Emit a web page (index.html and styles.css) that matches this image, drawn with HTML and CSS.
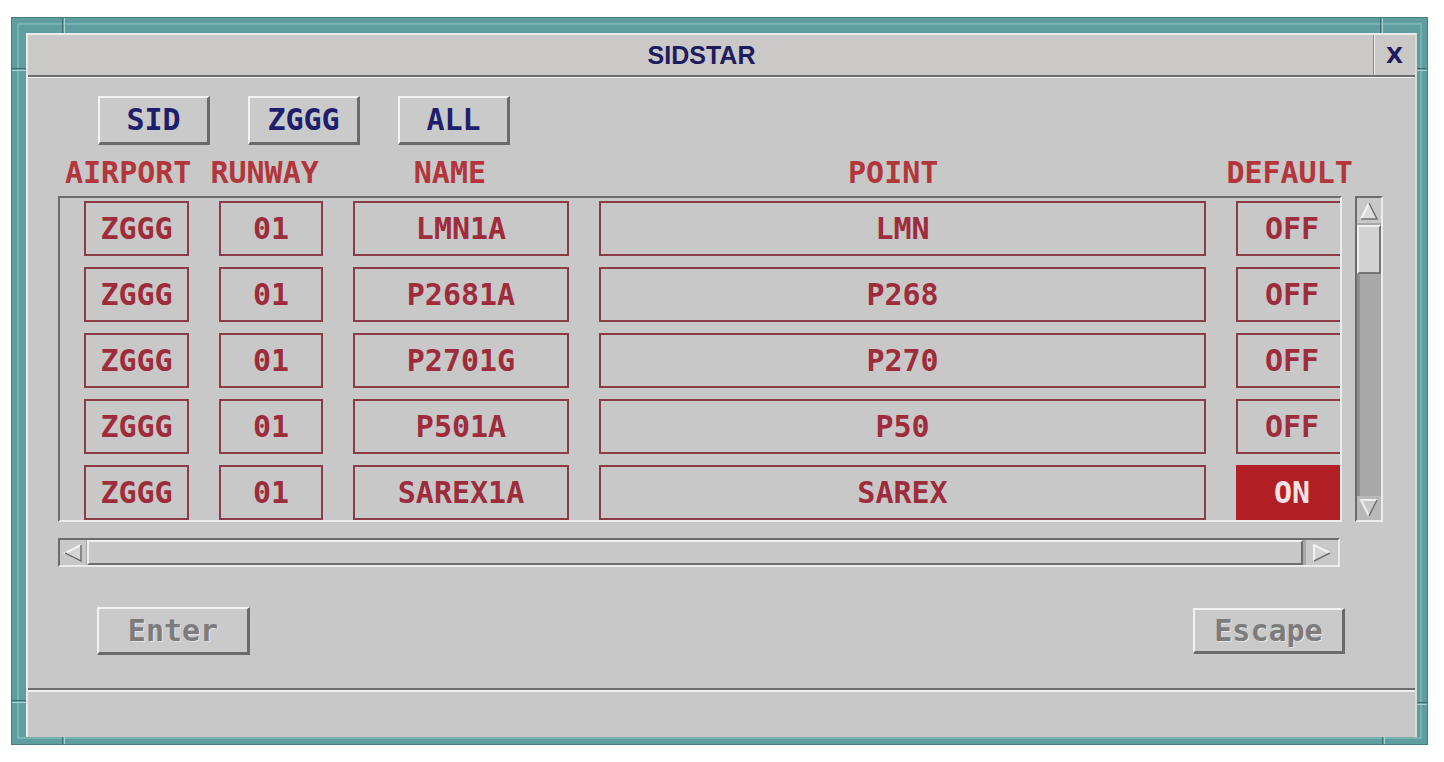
FILE: index.html
```html
<!DOCTYPE html>
<html>
<head>
<meta charset="utf-8">
<title>SIDSTAR</title>
<link rel="stylesheet" href="styles.css">
</head>
<body>
<div class="frame">
  <span class="tick tick-v tick-tl"></span>
  <span class="tick tick-v tick-tr"></span>
  <span class="tick tick-v tick-bl"></span>
  <span class="tick tick-v tick-br"></span>
  <span class="tick tick-h tick-lt"></span>
  <span class="tick tick-h tick-lb"></span>
  <span class="tick tick-h tick-rt"></span>
  <span class="tick tick-h tick-rb"></span>
  <div class="window">
    <div class="titlebar">
      <div class="title">SIDSTAR</div>
      <div class="close">X</div>
    </div>
    <div class="main">
      <div class="toolbar">
        <div class="btn btn-nav">SID</div>
        <div class="btn btn-nav">ZGGG</div>
        <div class="btn btn-nav">ALL</div>
      </div>
      <div class="headers">
        <span class="hd hd-airport">AIRPORT</span>
        <span class="hd hd-runway">RUNWAY</span>
        <span class="hd hd-name">NAME</span>
        <span class="hd hd-point">POINT</span>
        <span class="hd hd-default">DEFAULT</span>
      </div>
      <div class="list-row">
        <div class="list">
          <div class="grid">
            <div class="cell">ZGGG</div><div class="cell">01</div><div class="cell">LMN1A</div><div class="cell">LMN</div><div class="cell">OFF</div>
            <div class="cell">ZGGG</div><div class="cell">01</div><div class="cell">P2681A</div><div class="cell">P268</div><div class="cell">OFF</div>
            <div class="cell">ZGGG</div><div class="cell">01</div><div class="cell">P2701G</div><div class="cell">P270</div><div class="cell">OFF</div>
            <div class="cell">ZGGG</div><div class="cell">01</div><div class="cell">P501A</div><div class="cell">P50</div><div class="cell">OFF</div>
            <div class="cell">ZGGG</div><div class="cell">01</div><div class="cell">SAREX1A</div><div class="cell">SAREX</div><div class="cell cell-on">ON</div>
          </div>
        </div>
        <div class="vscroll">
          <div class="vs-arrow vs-up">
            <svg width="20" height="20" viewBox="0 0 20 20"><polygon points="10,2 18,18 2,18" fill="#dcdcdc"/><polyline points="2,18 10,2" fill="none" stroke="#f4f4f4" stroke-width="2"/><polyline points="10,2 18,18 2,18" fill="none" stroke="#707070" stroke-width="1.5"/></svg>
          </div>
          <div class="vs-thumb"></div>
          <div class="vs-track"></div>
          <div class="vs-arrow vs-down">
            <svg width="20" height="20" viewBox="0 0 20 20"><polygon points="2,2 18,2 10,18" fill="#c8c8c8"/><polyline points="10,18 2,2 18,2" fill="none" stroke="#f0f0f0" stroke-width="2"/><polyline points="18,2 10,18" fill="none" stroke="#707070" stroke-width="1.5"/></svg>
          </div>
        </div>
      </div>
      <div class="hscroll">
        <div class="hs-arrow hs-left">
          <svg width="20" height="20" viewBox="0 0 20 20"><polygon points="2,10 18,2 18,18" fill="#d4d4d4"/><polyline points="18,18 2,10 18,2" fill="none" stroke="#f2f2f2" stroke-width="2"/><polyline points="18,2 18,18 2,10" fill="none" stroke="#707070" stroke-width="1.5"/></svg>
        </div>
        <div class="hs-thumb"></div>
        <div class="hs-arrow hs-right">
          <svg width="20" height="20" viewBox="0 0 20 20"><polygon points="18,10 2,2 2,18" fill="#d4d4d4"/><polyline points="2,18 2,2 18,10" fill="none" stroke="#f2f2f2" stroke-width="2"/><polyline points="18,10 2,18" fill="none" stroke="#707070" stroke-width="1.5"/></svg>
        </div>
      </div>
      <div class="actions">
        <div class="btn btn-dis btn-enter">Enter</div>
        <div class="btn btn-dis btn-escape">Escape</div>
      </div>
    </div>
    <div class="status"></div>
  </div>
</div>
</body>
</html>
```
FILE: styles.css
```css
* { box-sizing: border-box; }

body {
  margin: 0;
  background: #ffffff;
  font-family: "DejaVu Sans Mono", "Liberation Mono", monospace;
}

.frame {
  position: relative;
  margin: 17px 0 0 11px;
  width: 1417px;
  height: 728px;
  background: #5f9ea0;
  border: 1px solid #467f81;
  padding: 15px 10px 7px 14px;
  box-shadow: inset 0 0 0 5px #5f9ea0, inset 0 0 0 7px #79b2b3;
}

.tick { position: absolute; display: block; }
.tick-v { width: 3px; border-left: 1px solid #3b6f71; border-right: 1px solid #a6d2d2; }
.tick-h { height: 3px; border-top: 1px solid #3b6f71; border-bottom: 1px solid #a6d2d2; }
.tick-tl { left: 50px; top: 0; height: 15px; }
.tick-tr { left: 1368px; top: 0; height: 15px; }
.tick-bl { left: 50px; bottom: 0; height: 7px; }
.tick-br { left: 1370px; bottom: 0; height: 7px; }
.tick-lt { left: 0; top: 50px; width: 14px; }
.tick-lb { left: 0; top: 682px; width: 14px; }
.tick-rt { right: 0; top: 50px; width: 10px; }
.tick-rb { right: 0; top: 684px; width: 10px; }

.window {
  height: 100%;
  display: flex;
  flex-direction: column;
  background: #c8c8c8;
  border-left: 2px solid #ececec;
  border-top: 2px solid #ececec;
  border-right: 2px solid #dadada;
}

.titlebar {
  height: 42px;
  display: flex;
  border-bottom: 2px solid #6e6e6e;
  background: #cbc8c8;
}

.title {
  flex: 1;
  display: flex;
  align-items: center;
  justify-content: center;
  font-family: "Liberation Sans", Arial, sans-serif;
  font-weight: bold;
  font-size: 25px;
  color: #1c1c5e;
  padding-left: 2px;
}

.close {
  width: 42px;
  display: flex;
  align-items: center;
  justify-content: center;
  border-left: 1px solid #8a8a8a;
  box-shadow: inset 1px 0 0 #eeeeee;
  font-family: "DejaVu Sans", sans-serif;
  font-weight: bold;
  font-size: 22px;
  color: #1c1c5e;
}

.main {
  flex: 1;
  display: flex;
  flex-direction: column;
  box-shadow: inset 0 1px 0 #f2f2f2;
}

.btn {
  display: flex;
  align-items: center;
  justify-content: center;
  background: #cacaca;
  border-top: 2px solid #f2f2f2;
  border-left: 2px solid #f2f2f2;
  border-bottom: 3px solid #6a6a6a;
  border-right: 3px solid #6a6a6a;
  font-size: 30px;
  font-weight: bold;
  line-height: 1;
}

.toolbar {
  display: flex;
  gap: 38px;
  margin-top: 19px;
  padding-left: 70px;
}

.btn-nav {
  width: 112px;
  height: 49px;
  color: #1e1e6c;
}

.headers {
  display: flex;
  margin-top: 13px;
  height: 30px;
  line-height: 30px;
  font-size: 30px;
  font-weight: bold;
  color: #b2363c;
  white-space: nowrap;
}

.hd-airport { margin-left: 37px; }
.hd-runway { margin-left: 19px; }
.hd-name { margin-left: 95px; }
.hd-point { margin-left: 362px; }
.hd-default { margin-left: 288px; }

.list-row {
  display: flex;
  margin-top: 8px;
  padding-left: 30px;
}

.list {
  width: 1284px;
  height: 326px;
  overflow: hidden;
  border-top: 2px solid #6c6c6c;
  border-left: 2px solid #6c6c6c;
  border-bottom: 2px solid #ececec;
  border-right: 2px solid #ececec;
  padding: 3px 0 0 24px;
}

.grid {
  display: grid;
  grid-template-columns: 105px 104px 216px 607px 112px;
  grid-auto-rows: 55px;
  column-gap: 30px;
  row-gap: 11px;
}

.cell {
  display: flex;
  align-items: center;
  justify-content: center;
  border: 2px solid #8c3c46;
  font-size: 30px;
  font-weight: bold;
  color: #9e2c3c;
  white-space: nowrap;
}

.cell-on {
  background: #b11f24;
  border-color: #b11f24;
  color: #f6e2e2;
}

.vscroll {
  margin-left: 13px;
  width: 28px;
  height: 326px;
  display: flex;
  flex-direction: column;
  background: #a9a9a9;
  border-top: 2px solid #6c6c6c;
  border-left: 2px solid #6c6c6c;
  border-bottom: 2px solid #ececec;
  border-right: 2px solid #ececec;
}

.vs-arrow {
  height: 25px;
  display: flex;
  align-items: center;
  justify-content: center;
  background: #c8c8c8;
}

.vs-thumb {
  height: 49px;
  margin-top: 2px;
  background: #d2d2d2;
  border-top: 2px solid #f0f0f0;
  border-left: 2px solid #f0f0f0;
  border-bottom: 2px solid #747474;
  border-right: 2px solid #747474;
}

.vs-track {
  flex: 1;
  border-left: 3px solid #8e8e8e;
}

.vs-down { height: 24px; background: #b8b8b8; }

.hscroll {
  margin-top: 16px;
  margin-left: 30px;
  width: 1282px;
  height: 29px;
  display: flex;
  background: #a9a9a9;
  border-top: 2px solid #6c6c6c;
  border-left: 2px solid #6c6c6c;
  border-bottom: 2px solid #ececec;
  border-right: 2px solid #ececec;
}

.hs-arrow {
  display: flex;
  align-items: center;
  justify-content: center;
  background: #c8c8c8;
}

.hs-left { width: 26px; }
.hs-right { width: 32px; }

.hs-thumb {
  flex: 1;
  margin: 0 3px 0 1px;
  background: #c8c8c8;
  border-top: 2px solid #f0f0f0;
  border-left: 2px solid #f0f0f0;
  border-bottom: 2px solid #6e6e6e;
  border-right: 2px solid #6e6e6e;
}

.actions {
  display: flex;
  justify-content: space-between;
  align-items: flex-start;
  margin-top: 40px;
  padding: 0 70px 0 69px;
}

.btn-dis {
  color: #7c7c7c;
  text-shadow: 1px 1px 0 #e4e4e4;
}

.btn-enter { width: 153px; height: 48px; }
.btn-escape { width: 152px; height: 46px; margin-top: 1px; }

.status {
  height: 49px;
  border-top: 2px solid #6e6e6e;
  box-shadow: inset 0 2px 0 #efefef;
}
```
